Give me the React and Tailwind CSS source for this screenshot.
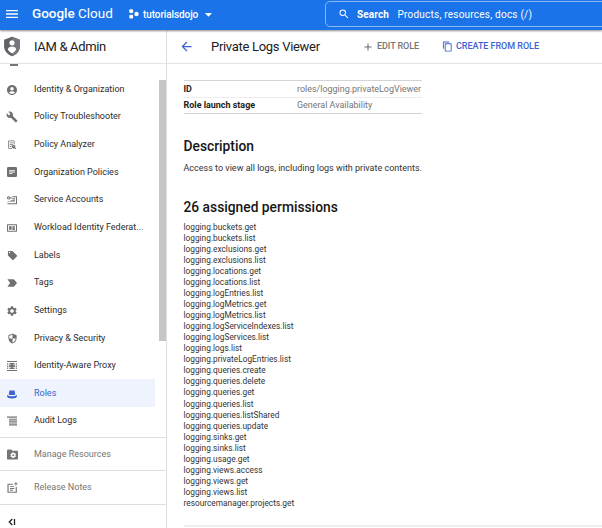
import React from "react";
import {
  MdMenu, MdSearch, MdArrowBack, MdAdd, MdContentCopy, MdAccountCircle, MdBuild,
  MdLocalOffer, MdSettings, MdSecurity, MdArrowDropDown,
} from "react-icons/md";

function Svg({ children, className = "size-[10px]" }) {
  return (
    <svg viewBox="0 0 24 24" className={className} fill="currentColor">
      {children}
    </svg>
  );
}

const Analyzer = () => (
  <Svg>
    <path fillRule="evenodd" d="M4 1h12a2 2 0 0 1 2 2v8h-2V3H5v16h7v2H5a2 2 0 0 1-2-2V3a2 2 0 0 1 1-2z" />
    <path d="M7 6h7v2H7z M7 10h7v2H7z M7 14h4v2H7z" />
    <path fillRule="evenodd" d="M16 12a4 4 0 0 1 3.500 6l2.500 2.500-1.500 1.500-3-2.500A4 4 0 1 1 16 12z M16 15a1 1 0 1 0 0 2 1 1 0 0 0 0-2z" />
  </Svg>
);
const Policies = () => (
  <Svg>
    <path fillRule="evenodd" d="M3 0h18a3 3 0 0 1 3 3v18a3 3 0 0 1-3 3H3a3 3 0 0 1-3-3V3a3 3 0 0 1 3-3z M5 7v2h14V7z M5 11v2h14V11z M5 15v2h8V15z" />
  </Svg>
);
const ServiceAccounts = () => (
  <Svg>
    <path fillRule="evenodd" d="M4 3a4 4 0 0 1 3.800 2.700H12v2.600H7.800A4 4 0 1 1 4 3z M4 5.500a1.500 1.500 0 1 0 0 3 1.500 1.500 0 0 0 0-3z" />
    <path d="M13 3h11v19H1v-2.500h20.500V5.500H13z M13 8h6v2.500h-6z M9 12.500h10v2H9z M1 15.500h18v1.500H1z" />
  </Svg>
);
const Federation = () => (
  <Svg>
    <path fillRule="evenodd" d="M2 3h20a2 2 0 0 1 2 2v14a2 2 0 0 1-2 2H2a2 2 0 0 1-2-2V5a2 2 0 0 1 2-2z M2.500 5.500v13h19v-13z" />
    <path d="M5 8h6v8H5z M13 8h6v2.500h-3.500v1H19v2h-3.500v1H19V17h-6z" />
  </Svg>
);
const Tag = () => (
  <Svg>
    <path d="M1 3h14c1 0 2 .4 2.600 1.300L24 12l-6.400 7.700c-.6.900-1.600 1.300-2.600 1.300H1l6.500-9z" />
  </Svg>
);
const Proxy = () => (
  <Svg>
    <path d="M0 0h24v2.500H0z M0 21.500h24V24H0z M0 5.500h3v3H0z M0 10.500h3v3H0z M0 15.500h3v3H0z M21 5.500h3v3h-3z M21 10.500h3v3h-3z M21 15.500h3v3h-3z M6 5h12v2.500H6z M6 16.500h12V19H6z M5 9h2.500v6H5z M16.500 9H19v6h-2.500z" />
    <circle cx="12" cy="12" r="4.800" />
  </Svg>
);
const Hat = () => (
  <Svg>
    <path d="M6 4c2-2 4 0 6 0s4-2 6 0l2 9c-4 2-12 2-16 0z M0 14.500c5 4 19 4 24 0v3c-1 4-5 5-12 5s-11-1-12-5z" />
  </Svg>
);
const Audit = () => (
  <Svg>
    <path d="M0 1h24v3H0z M5 6.500h19V9H5z M5 11h19v2.500H5z M5 15.500h19V18H5z M5 20h19v2.500H5z" />
  </Svg>
);
const Manage = () => (
  <Svg className="size-[11px]">
    <path fillRule="evenodd" d="M1 1h8l3 3h10a2 2 0 0 1 2 2v15a2 2 0 0 1-2 2H2a2 2 0 0 1-2-2V3z M12 7.500l-1 2-2-.3-1.500 2.600L9 13.500l-1.500 1.800L9 18l2-.4 1 2h3l1-2 2 .4 1.500-2.700-1.500-1.800 1.500-1.700L18 9.200l-2 .3-1-2z M13.500 11.500a2 2 0 1 1 0 4 2 2 0 0 1 0-4z" />
  </Svg>
);
const Notes = () => (
  <Svg className="size-[11px]">
    <path d="M1 4h12v2.200H3.500V21H19V11h2.500v12.500H1z M6.500 9H16v2H6.500z M6.500 13H16v2H6.500z M6.500 17H13v2H6.500z M18.500 0h2v3h3v2h-3v3h-2V5h-3V3h3z" />
  </Svg>
);

const items = [
  ["Identity & Organization", <MdAccountCircle className="size-3" />],
  ["Policy Troubleshooter", <MdBuild className="size-3" />],
  ["Policy Analyzer", <Analyzer />],
  ["Organization Policies", <Policies />],
  ["Service Accounts", <ServiceAccounts />],
  ["Workload Identity Federat...", <Federation />],
  ["Labels", <MdLocalOffer className="size-[11px]" />],
  ["Tags", <Tag />],
  ["Settings", <MdSettings className="size-3" />],
  ["Privacy & Security", <MdSecurity className="size-[11px]" />],
  ["Identity-Aware Proxy", <Proxy />],
  ["Roles", <Hat />],
  ["Audit Logs", <Audit />],
];

const permissions = [
  "buckets.get", "buckets.list", "exclusions.get", "exclusions.list", "locations.get",
  "locations.list", "logEntries.list", "logMetrics.get", "logMetrics.list",
  "logServiceIndexes.list", "logServices.list", "logs.list", "privateLogEntries.list",
  "queries.create", "queries.delete", "queries.get", "queries.list", "queries.listShared",
  "queries.update", "sinks.get", "sinks.list", "usage.get", "views.access", "views.get",
  "views.list",
].map((p) => "logging." + p).concat("resourcemanager.projects.get");

function TopBar() {
  return (
    <header className="relative z-10 flex h-[30px] shrink-0 items-center bg-[#1a73e8] text-white shadow-[0_1px_2px_rgba(0,0,0,0.45)]">
      <MdMenu className="ml-1 mt-[-3px] size-4 shrink-0" />
      <div className="-mt-1 ml-3 w-[81px] shrink-0 whitespace-nowrap text-[13.500px] leading-4 tracking-[-0.020px]">
        <span className="font-medium">Google</span> Cloud
      </div>
      <svg viewBox="0 0 10 10" className="-mt-0.5 ml-[16px] size-[10px] shrink-0" fill="currentColor">
        <rect x="0.300" y="0.300" width="3.800" height="3.800" rx="1" />
        <rect x="0.300" y="5.800" width="3.800" height="3.800" rx="1" />
        <circle cx="7.500" cy="5" r="2.200" />
      </svg>
      <span className="-mt-px ml-[4px] w-[55px] shrink-0 text-[10px] font-medium tracking-[-0.1px]">tutorialsdojo</span>
      <MdArrowDropDown className="-mt-px ml-[2px] size-[17px] shrink-0" />
      <div className="-mr-2 -mt-[2px] ml-[108px] flex h-[26px] flex-1 items-center whitespace-nowrap rounded-[5px] border border-[#8ab8f5]">
        <MdSearch className="ml-[12px] size-3 shrink-0" />
        <span className="ml-[7px] w-[40.500px] shrink-0 text-[10px] font-bold tracking-[0.1px]">Search</span>
        <span className="text-[10px] tracking-[0.220px]">Products, resources, docs (/)</span>
      </div>
    </header>
  );
}

function Sidebar() {
  return (
    <aside className="flex w-[167px] shrink-0 flex-col border-r border-[#dedede]">
      <div className="flex h-[34px] shrink-0 items-center border-b border-[#e4e4e4] text-[#202124]">
        <svg viewBox="0 0 18 22" className="ml-[3px] h-[21px] w-[18px]">
          <path d="M9 .8 17.300 3.800v7c0 5-3.300 8.600-8.300 10.400C4 19.400.7 15.800.7 10.800v-7z" fill="#5f6368" />
          <path d="M9 .8 17.300 3.800v7c0 5-3.300 8.600-8.300 10.400z" fill="#74777b" />
          <circle cx="9" cy="7.200" r="2.700" fill="white" />
          <path d="M4.800 13.800c0-2 2.100-2.900 4.200-2.900s4.200.9 4.200 2.900C12.500 16 10.800 17.300 9 18 7.200 17.300 5.500 16 4.800 13.800z" fill="white" />
        </svg>
        <span className="ml-[13px] text-[13px] tracking-[-0.330px]">IAM &amp; Admin</span>
      </div>
      <div className="flex h-[373px] shrink-0 justify-between">
        <nav className="w-[155px]">
          <div className="h-[11.200px] pl-[10px]">
            <div className="h-[2px] w-[8px] bg-[#757575]" />
          </div>
          {items.map(([label, icon]) => (
            <div
              key={label}
              className={
                "flex h-[27.650px] items-center pl-[6px] text-[9px] " +
                (label === "Roles" ? "bg-[#eef3fd] text-[#3b62d0]" : "text-[#2c2c2c]")
              }
            >
              <span className={"mr-4 flex w-3 justify-center pt-px " + (label === "Roles" ? "text-[#3b62d0]" : "text-[#707070]")}>{icon}</span>
              <span className="whitespace-nowrap pt-px">{label}</span>
            </div>
          ))}
        </nav>
        <div className="mt-4 h-[261px] w-[7px] bg-[#c6c6c6]" />
      </div>
      <div className="flex h-[34px] shrink-0 items-center border-y border-[#dedede] pl-[6px] text-[9px] text-[#757575]">
        <span className="mr-4 flex w-3 justify-center"><Manage /></span>
        <span className="pt-px">Manage Resources</span>
      </div>
      <div className="flex h-[34px] shrink-0 items-center border-b border-[#dedede] pl-[6px] text-[9px] text-[#757575]">
        <span className="mr-4 flex w-3 justify-center"><Notes /></span>
        <span className="pt-px">Release Notes</span>
      </div>
      <div className="flex flex-1 items-end pb-[2px] pl-[8px]">
        <svg viewBox="0 0 8 8" className="size-2" fill="none" stroke="#222" strokeWidth="1.300">
          <path d="M4.300 1 1.300 4l3 3M6.500 1v6" />
        </svg>
      </div>
    </aside>
  );
}

function RoleDetails() {
  return (
    <main className="min-w-0 flex-1">
      <div className="flex h-[34px] items-center whitespace-nowrap border-b border-[#e4e4e4]">
        <MdArrowBack className="ml-[12px] size-[15px] shrink-0 text-[#3b62d0]" />
        <h1 className="ml-[17px] w-[151px] shrink-0 text-[13px] tracking-[-0.300px] text-[#202124]">Private Logs Viewer</h1>
        <MdAdd className="size-3 shrink-0 text-[#666]" />
        <span className="ml-[3px] w-[65px] shrink-0 pt-px text-[9px] font-medium tracking-[-0.080px] text-[#757575]">EDIT ROLE</span>
        <MdContentCopy className="size-[11px] shrink-0 text-[#3b62d0]" />
        <span className="ml-[3px] pt-px text-[9px] font-medium tracking-[-0.040px] text-[#3b62d0]">CREATE FROM ROLE</span>
      </div>
      <div className="pl-[16.500px]">
        <dl className="mt-[16px] w-[238px] border-t border-[#d4d4d4] text-[8.950px]">
          <div className="flex h-[17px] items-center border-b border-[#ededed] pt-px">
            <dt className="w-[113.500px] font-bold text-[#222]">ID</dt>
            <dd className="whitespace-nowrap text-[#757575]">roles/logging.privateLogViewer</dd>
          </div>
          <div className="flex h-4 items-center border-b border-[#d4d4d4] pt-px">
            <dt className="w-[113.500px] font-bold text-[#222]">Role launch stage</dt>
            <dd className="text-[#757575]">General Availability</dd>
          </div>
        </dl>
        <h2 className="mt-[24px] text-[13.800px] font-medium leading-[16px] text-[#161616]">Description</h2>
        <p className="mt-[8px] whitespace-nowrap text-[9px] leading-[12px] text-[#333]">
          Access to view all logs, including logs with private contents.
        </p>
        <h2 className="mt-[25px] text-[13.800px] font-medium leading-[16px] text-[#161616]">26 assigned permissions</h2>
        <ul className="mt-[6.500px] text-[8.320px] leading-[11.060px] text-[#333]">
          {permissions.map((p) => <li key={p}>{p}</li>)}
        </ul>
        <div className="mt-[16px] h-[2px] bg-[#eeeeee]" />
      </div>
    </main>
  );
}

export default function App() {
  return (
    <div className="flex h-[528px] w-[602px] flex-col overflow-hidden bg-white font-['Roboto',sans-serif]">
      <TopBar />
      <div className="flex min-h-0 flex-1">
        <Sidebar />
        <RoleDetails />
      </div>
    </div>
  );
}
